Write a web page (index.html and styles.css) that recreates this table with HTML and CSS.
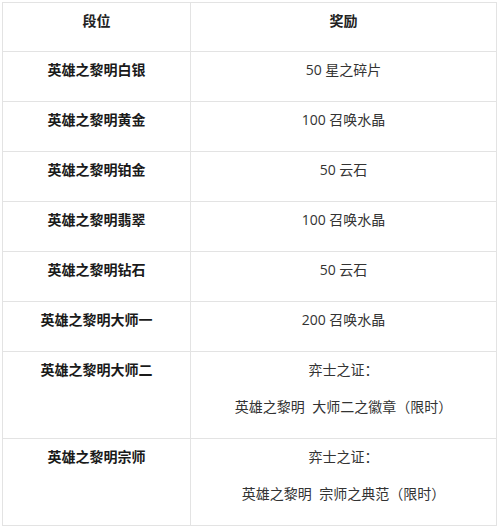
FILE: index.html
```html
<!DOCTYPE html>
<html lang="zh">
<head>
<meta charset="utf-8">
<link rel="stylesheet" href="styles.css">
</head>
<body>
<table class="rank-table">
  <thead>
    <tr><th class="col-rank">段位</th><th>奖励</th></tr>
  </thead>
  <tbody>
    <tr><td class="rank">英雄之黎明白银</td><td>50 星之碎片</td></tr>
    <tr><td class="rank">英雄之黎明黄金</td><td>100 召唤水晶</td></tr>
    <tr><td class="rank">英雄之黎明铂金</td><td>50 云石</td></tr>
    <tr><td class="rank">英雄之黎明翡翠</td><td>100 召唤水晶</td></tr>
    <tr><td class="rank">英雄之黎明钻石</td><td>50 云石</td></tr>
    <tr><td class="rank">英雄之黎明大师一</td><td>200 召唤水晶</td></tr>
    <tr><td class="rank">英雄之黎明大师二</td><td><p>弈士之证：</p><p>英雄之黎明&nbsp;&nbsp;大师二之徽章（限时）</p></td></tr>
    <tr><td class="rank">英雄之黎明宗师</td><td><p>弈士之证：</p><p>英雄之黎明&nbsp;&nbsp;宗师之典范（限时）</p></td></tr>
  </tbody>
</table>
</body>
</html>
```
FILE: styles.css
```css
html, body {
  margin: 0;
  padding: 0;
  background: #ffffff;
}
body {
  padding: 2px 3px 0 2px;
  font-family: "Open Sans", "Noto Sans CJK SC", sans-serif;
  font-size: 14px;
  color: #333333;
}
.rank-table {
  width: 495px;
  border-collapse: collapse;
  table-layout: fixed;
}
.rank-table th,
.rank-table td {
  border: 1px solid #e3e3e3;
  text-align: center;
  vertical-align: top;
  line-height: 24px;
  padding: 6px 8px 19px;
}
.rank-table th {
  font-weight: bold;
  color: #222222;
  padding-bottom: 18px;
}
.col-rank {
  width: 171px;
}
.rank {
  font-weight: bold;
  color: #1a1a1a;
}
.rank-table p {
  margin: 0;
}
.rank-table p + p {
  margin-top: 13px;
}
```
